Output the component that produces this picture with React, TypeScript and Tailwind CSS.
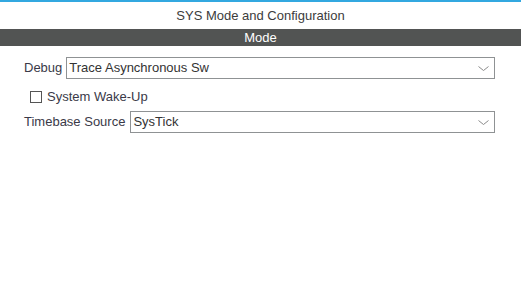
import React from "react";

function Chevron() {
  return (
    <svg width="11" height="5" viewBox="0 0 11 5" className="mr-[5px]">
      <path d="M0.5 0.5 L5.5 4.5 L10.5 0.5" fill="none" stroke="#8a8a8a" strokeWidth="1" />
    </svg>
  );
}

function Select({ value, width }: { value: string; width: string }) {
  return (
    <div className={`flex h-[22px] items-center justify-between border border-[#8f9294] bg-white pl-[2px] ${width}`}>
      <span className="text-[13px] leading-[20px] text-[#333333]">{value}</span>
      <Chevron />
    </div>
  );
}

export default function App() {
  return (
    <div
      className="h-[288px] w-[521px] bg-white"
      style={{ fontFamily: '"Liberation Sans", Arial, sans-serif' }}
    >
      <div className="h-[2px] bg-[#33a8e0]" />
      <div className="flex h-[27px] items-center justify-center text-[13px] text-[#3c3c3c]">
        SYS Mode and Configuration
      </div>
      <div className="flex h-[17px] items-center justify-center bg-[#525453] text-[13px] text-white">
        Mode
      </div>
      <div className="flex flex-col pl-[24px] pt-[11px]">
        <div className="flex h-[22px] items-center">
          <span className="mr-[4px] text-[13px] leading-[20px] text-[#3a3a48]">Debug</span>
          <Select value="Trace Asynchronous Sw" width="w-[429px]" />
        </div>
        <div className="mt-[12px] flex h-[12px] items-center pl-[6px]">
          <div className="h-[12px] w-[12px] border border-[#555555] bg-white" />
          <span className="ml-[5px] text-[13px] leading-[12px] text-[#3a3a48]">System Wake-Up</span>
        </div>
        <div className="mt-[8px] flex h-[22px] items-center">
          <span className="mr-[5px] text-[13px] leading-[20px] text-[#3a3a48]">Timebase Source</span>
          <Select value="SysTick" width="w-[365px]" />
        </div>
      </div>
    </div>
  );
}
